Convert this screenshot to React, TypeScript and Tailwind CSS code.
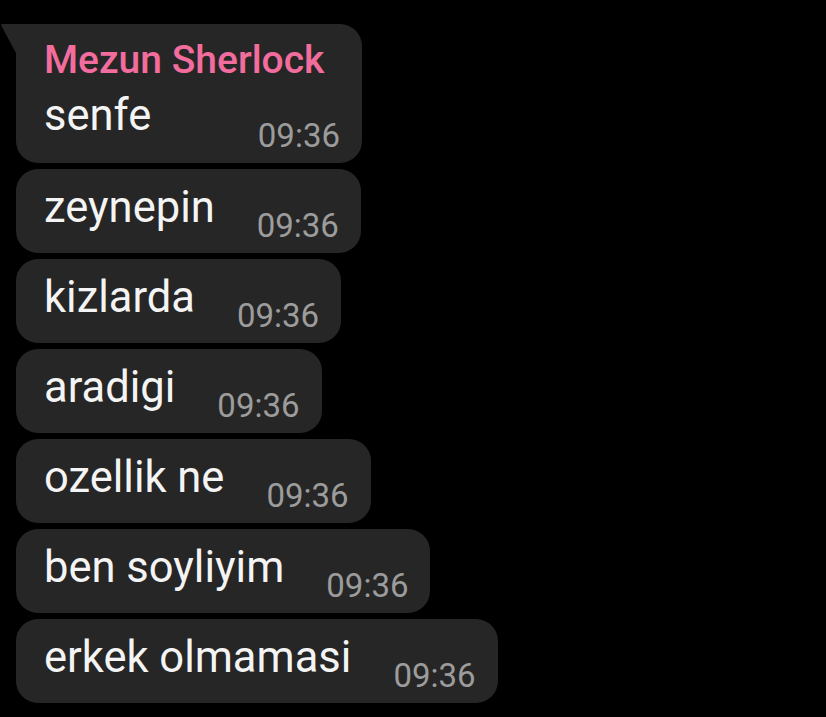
const messages = [
  "zeynepin",
  "kizlarda",
  "aradigi",
  "ozellik ne",
  "ben soyliyim",
  "erkek olmamasi",
];

function Time() {
  return (
    <span className="ml-[42px] mb-[11px] shrink-0 text-[33px] leading-[33px] text-[#9c9c9c]">
      09:36
    </span>
  );
}

export default function App() {
  return (
    <div
      className="min-h-[717px] w-[826px] bg-black pl-4 pt-6"
      style={{ fontFamily: "Roboto, 'Noto Sans', sans-serif" }}
    >
      <div className="flex flex-col items-start gap-[6px]">
        <div className="relative flex h-[139px] w-[346px] flex-col rounded-[22px] rounded-tl-none bg-[#262626] pl-7 pr-[22px] pt-[14px]">
          <svg className="absolute -left-4 top-0" width="17" height="32" viewBox="0 0 17 32">
            <path d="M17 0 L2.5 0 Q0 0 1.8 2.6 L17 31 Z" fill="#262626" />
          </svg>
          <div className="whitespace-nowrap text-[39px] font-medium leading-[44px] text-[#f26d9d]">Mezun Sherlock</div>
          <div className="flex flex-1 items-end justify-between">
            <div className="mb-[23px] text-[43.5px] leading-[48px] text-[#f4f4f4]">senfe</div>
            <Time />
          </div>
        </div>
        {messages.map((m) => (
          <div key={m} className="flex h-[84px] items-end rounded-[22px] bg-[#262626] pl-7 pr-[22px]">
            <div className="mb-[21px] text-[43.5px] leading-[48px] text-[#f4f4f4]">{m}</div>
            <Time />
          </div>
        ))}
      </div>
    </div>
  );
}
